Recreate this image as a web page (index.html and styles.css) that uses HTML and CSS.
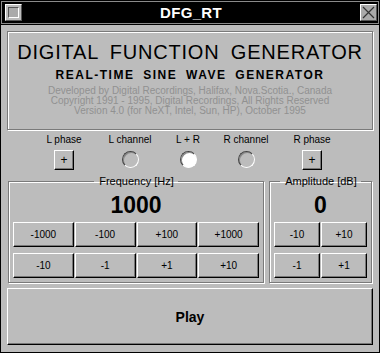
FILE: index.html
```html
<!DOCTYPE html>
<html lang="en">
<head>
    <meta charset="UTF-8">
    <title>DFG_RT</title>
    <link rel="stylesheet" href="styles.css">
</head>
<body>
    <div class="window">
        <div class="titlebar">
            <span class="mini-btn"><span class="mini-inner"></span></span>
            <span class="title">DFG_RT</span>
            <span class="close-btn">
                <svg width="15" height="15" viewBox="0 0 15 15">
                    <path d="M2 2 L13 13 M13 2 L2 13" stroke="#333" stroke-width="1.2" fill="none"/>
                </svg>
            </span>
        </div>
        <div class="content">
            <div class="header">
                <h1>DIGITAL FUNCTION GENERATOR</h1>
                <h2>REAL-TIME SINE WAVE GENERATOR</h2>
                <p>Developed by Digital Recordings, Halifax, Nova.Scotia., Canada<br>
                Copyright 1991 - 1995, Digital Recordings, All Rights Reserved<br>
                Version 4.0 (for NeXT, Intel, Sun, HP), October 1995</p>
            </div>

            <div class="channels">
                <div class="chan wide">
                    <span class="chan-label">L phase</span>
                    <button class="phase">+</button>
                </div>
                <div class="chan">
                    <span class="chan-label">L channel</span>
                    <span class="radio"></span>
                </div>
                <div class="chan">
                    <span class="chan-label">L + R</span>
                    <span class="radio on"></span>
                </div>
                <div class="chan">
                    <span class="chan-label">R channel</span>
                    <span class="radio"></span>
                </div>
                <div class="chan wide">
                    <span class="chan-label">R phase</span>
                    <button class="phase">+</button>
                </div>
            </div>

            <div class="groups">
                <fieldset class="group freq">
                    <legend>Frequency [Hz]</legend>
                    <div class="value">1000</div>
                    <div class="steps four">
                        <button>-1000</button>
                        <button>-100</button>
                        <button>+100</button>
                        <button>+1000</button>
                        <button>-10</button>
                        <button>-1</button>
                        <button>+1</button>
                        <button>+10</button>
                    </div>
                </fieldset>
                <fieldset class="group amp">
                    <legend>Amplitude [dB]</legend>
                    <div class="value">0</div>
                    <div class="steps two">
                        <button>-10</button>
                        <button>+10</button>
                        <button>-1</button>
                        <button>+1</button>
                    </div>
                </fieldset>
            </div>

            <button class="play">Play</button>
        </div>
    </div>
</body>
</html>
```

FILE: styles.css
```css
body {
    margin: 0;
    font-family: "Liberation Sans", Arial, sans-serif;
    background: #bcbcbc;
}
.window {
    box-sizing: border-box;
    width: 380px;
    height: 353px;
    border: 1px solid #000;
    background: #bcbcbc;
    overflow: hidden;
}
.titlebar {
    height: 23px;
    background: #000;
    box-shadow: inset 0 0 0 1px #8a8a8a;
    border-bottom: 1px solid #000;
    display: flex;
    align-items: center;
    justify-content: space-between;
    padding: 0 2px 0 4px;
}
.title {
    color: #fff;
    font-weight: bold;
    font-size: 15px;
    letter-spacing: 0.3px;
}
.mini-btn {
    box-sizing: border-box;
    width: 17px;
    height: 17px;
    background: #bcbcbc;
    border: 1px solid;
    border-color: #fff #555 #555 #fff;
    display: flex;
    align-items: center;
    justify-content: center;
}
.mini-inner {
    box-sizing: border-box;
    width: 11px;
    height: 11px;
    border: 1px solid;
    border-color: #555 #fff #fff #555;
    background: #aaa;
}
.close-btn {
    box-sizing: border-box;
    width: 17px;
    height: 17px;
    background: #aaa;
    border: 1px solid;
    border-color: #fff #555 #555 #fff;
    display: flex;
    align-items: center;
    justify-content: center;
}
.close-btn svg {
    display: block;
}
.content {
    padding: 6px 6px 0 6px;
}
.header {
    border: 1px solid #7a7a7a;
    box-shadow: inset 1px 1px 0 #fff, 1px 1px 0 #fff;
    padding: 10px 0 9px 0;
    height: 78px;
    text-align: center;
}
.header h1 {
    margin: 0;
    font-size: 20px;
    line-height: 20px;
    font-weight: normal;
    letter-spacing: 0.8px;
    word-spacing: 5px;
}
.header h2 {
    margin: 6px 0 0 0;
    font-size: 12px;
    line-height: 14px;
    font-weight: bold;
    letter-spacing: 1.5px;
    word-spacing: 4px;
}
.header p {
    margin: 4px 0 0 0;
    font-size: 10px;
    line-height: 10px;
    color: #919191;
}
.channels {
    display: flex;
    margin: 4px 0 0 20px;
}
.chan {
    width: 58px;
    display: flex;
    flex-direction: column;
    align-items: center;
}
.chan.wide {
    width: 74px;
}
.chan-label {
    font-size: 10px;
    line-height: 12px;
    height: 12px;
    margin-bottom: 4px;
}
.phase {
    box-sizing: border-box;
    width: 20px;
    height: 20px;
    padding: 0;
    font-family: inherit;
    font-size: 12px;
    line-height: 16px;
    color: #000;
    background: #bcbcbc;
    border: 1px solid;
    border-color: #fff #000 #000 #fff;
    box-shadow: inset -1px -1px 0 #777;
}
.radio {
    box-sizing: border-box;
    width: 17px;
    height: 17px;
    margin-top: 1px;
    border-radius: 50%;
    border: 1px solid;
    border-color: #444 #fff #fff #444;
    box-shadow: inset 1px 1px 0 #8a8a8a;
}
.radio.on {
    background: #fff;
}
.groups {
    display: flex;
    gap: 5px;
    margin: 6px 1px 0 1px;
}
.group {
    margin: 0;
    border: 1px solid #7a7a7a;
    box-shadow: inset 1px 1px 0 #fff, 1px 1px 0 #fff;
    padding: 7px 4px 4px 4px;
    min-width: 0;
}
.group.freq {
    width: 256px;
    box-sizing: border-box;
}
.group.amp {
    width: 103px;
    box-sizing: border-box;
}
.group legend {
    margin: 0 auto;
    padding: 0 4px 0 5px;
    font-size: 11px;
    line-height: 10px;
}
.value {
    text-align: center;
    font-size: 23px;
    line-height: 24px;
    font-weight: bold;
    margin-bottom: 5px;
}
.steps {
    display: grid;
    gap: 6px 1px;
}
.steps.four {
    grid-template-columns: repeat(4, 1fr);
}
.steps.two {
    grid-template-columns: repeat(2, 1fr);
}
.steps button {
    height: 25px;
    padding: 0;
    font-family: inherit;
    font-size: 10px;
    color: #000;
    background: #bcbcbc;
    border: 1px solid;
    border-color: #fff #000 #000 #fff;
    box-shadow: inset -1px -1px 0 #777;
}
.play {
    display: block;
    width: 100%;
    height: 57px;
    margin-top: 5px;
    font-family: inherit;
    font-size: 14px;
    font-weight: bold;
    color: #000;
    background: #bcbcbc;
    border: 1px solid;
    border-color: #fff #000 #000 #fff;
    box-shadow: inset -1px -1px 0 #777;
}
```
